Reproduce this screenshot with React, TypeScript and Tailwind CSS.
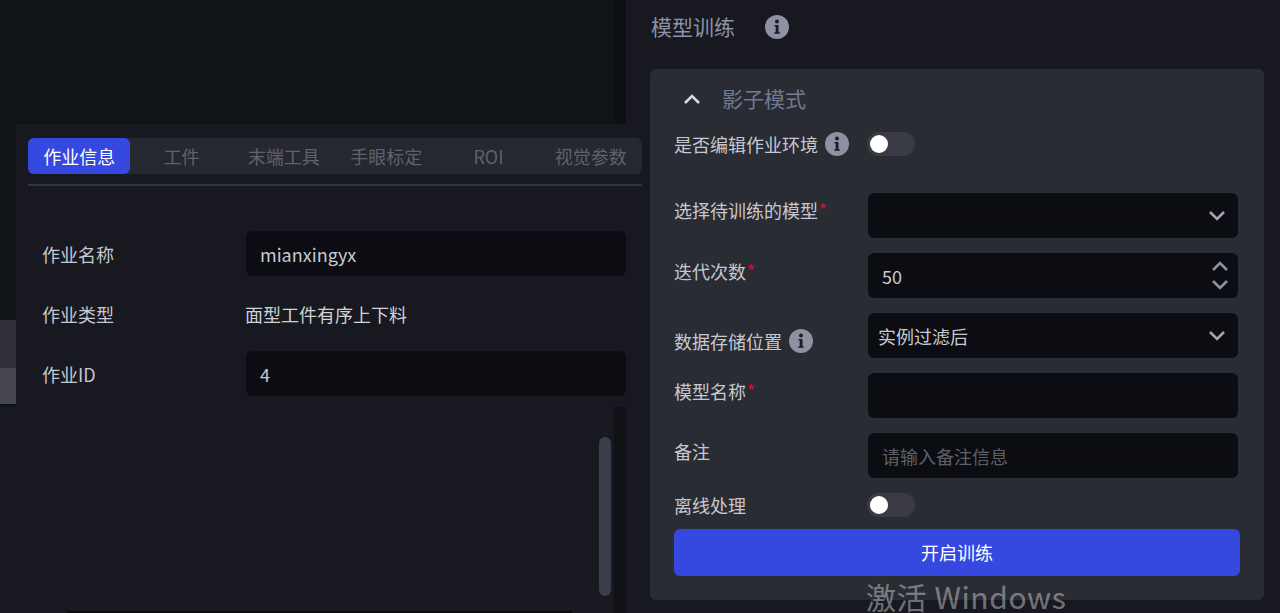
import type { ReactNode } from 'react';

function InfoIcon() {
  return (
    <svg width="24" height="24" viewBox="0 0 24 24" className="shrink-0">
      <circle cx="12" cy="12" r="12" fill="#8f90a2" />
      <circle cx="12" cy="6.6" r="2" fill="#1c1d24" />
      <path d="M9.5 10h4v7.2h1.3v1.6H9.3v-1.6h1.4v-5.6H9.5z" fill="#1c1d24" />
    </svg>
  );
}

function Chevron({ up = false, className = '' }: { up?: boolean; className?: string }) {
  return (
    <svg width="18" height="11" viewBox="0 0 18 11" className={className}>
      <path d={up ? 'M2 9l7-7 7 7' : 'M2 2l7 7 7-7'} fill="none" stroke="currentColor" strokeWidth="2.6" />
    </svg>
  );
}

function Toggle() {
  return (
    <div className="flex h-6 w-12 items-center rounded-full bg-[#3a3b45] pl-[3px]">
      <div className="h-[18px] w-[18px] rounded-full bg-white" />
    </div>
  );
}

function Req() {
  return <span className="ml-[1px] align-[3px] text-[15px] font-bold leading-none text-[#c4112f]">*</span>;
}

function Row({ label, pt, children }: { label: ReactNode; pt: string; children: ReactNode }) {
  return (
    <div className="flex h-[45px]">
      <div className={`w-[194px] shrink-0 text-[#c6c8d0] ${pt}`}>{label}</div>
      <div className="relative flex h-[45px] w-[370px] items-center rounded-md bg-[#0c0d12] px-[14px] text-[#c8cad2]">
        {children}
      </div>
    </div>
  );
}

const tabs = ['作业信息', '工件', '末端工具', '手眼标定', 'ROI', '视觉参数'];

function JobWindow() {
  return (
    <div className="absolute left-4 top-[124px] z-10 h-[283px] w-[634px] bg-[#181920] pl-3 pt-[14px]">
      <div className="flex h-9 w-[614px] rounded-md bg-[#262830]">
        {tabs.map((t, i) => (
          <div
            key={t}
            className={
              i === 0
                ? 'flex flex-1 items-center justify-center rounded-md bg-[#3549e0] text-white'
                : 'flex flex-1 items-center justify-center text-[#5f616b]'
            }
          >
            {t}
          </div>
        ))}
      </div>
      <div className="mt-[10px] h-[2px] w-[614px] bg-[#30323c]" />
      <div className="mt-[45px] flex flex-col gap-[15px] pl-[14px] text-[#c6c8d0]">
        <div className="flex h-[45px] items-center">
          <div className="w-[204px]">作业名称</div>
          <div className="flex h-[45px] w-[380px] items-center rounded-md bg-[#0c0d12] px-[14px] text-[#c8cad2]">
            mianxingyx
          </div>
        </div>
        <div className="flex h-[45px] items-center">
          <div className="w-[203px]">作业类型</div>
          <div className="text-[#d0d2d8]">面型工件有序上下料</div>
        </div>
        <div className="flex h-[45px] items-center">
          <div className="w-[204px]">作业ID</div>
          <div className="flex h-[45px] w-[380px] items-center rounded-md bg-[#0c0d12] px-[14px] text-[#c8cad2]">
            4
          </div>
        </div>
      </div>
    </div>
  );
}

export default function App() {
  return (
    <div className="relative flex h-[613px] w-[1280px] overflow-hidden bg-[#181920] font-['Noto_Sans_CJK_SC','Noto_Sans',sans-serif] text-[18px] leading-6">
      {/* Left side */}
      <div className="flex w-[626px] shrink-0 flex-col">
        <div className="flex h-[407px] justify-between bg-[#101318]">
          <div className="flex w-4 flex-col pt-[320px]">
            <div className="h-12 bg-[#2f3038]" />
            <div className="h-9 bg-[#45464e]" />
          </div>
          <div className="w-3 bg-[#0e0f13]" />
        </div>
        <div className="flex min-h-0 flex-1">
          <div className="flex flex-1 flex-col justify-end pl-[67px] pr-[27px]">
            <div className="h-[2px] bg-[#0b0c10]" />
          </div>
          <div className="mr-[3px] mt-[30px] mb-[17px] w-3 rounded-full bg-[#3c3d4a]" />
          <div className="w-3 bg-[#101114]" />
        </div>
      </div>

      <JobWindow />

      {/* Right side */}
      <div className="flex min-w-0 flex-1 flex-col pl-6 pr-4">
        <div className="flex h-[54px] items-center gap-[30px] pl-[1px] text-[21px] text-[#8d93a5]">
          <span className="mb-[2px]">模型训练</span>
          <InfoIcon />
        </div>
        <div className="mt-[15px] h-[531px] rounded-md bg-[#2a2c34] pl-6">
          <div className="flex h-[60px] items-center text-[21px] text-[#737a8f]">
            <Chevron up className="ml-[9px] mr-[21px] text-[#d8d9de]" />
            <span className="mb-[2px]">影子模式</span>
          </div>
          <div className="mt-[3px] flex h-6 items-center text-[#c6c8d0]">
            <span>是否编辑作业环境</span>
            <span className="ml-[7px]">
              <InfoIcon />
            </span>
            <div className="ml-[18px]">
              <Toggle />
            </div>
          </div>
          <div className="mt-[37px] flex flex-col gap-[15px]">
            <Row label={<>选择待训练的模型<Req /></>} pt="pt-[5px]">
              <Chevron className="absolute right-3 text-[#a3a4b2]" />
            </Row>
            <Row label={<>迭代次数<Req /></>} pt="pt-[6px]">
              50
              <div className="absolute right-[9px] flex flex-col gap-[7px] text-[#8f90a0]">
                <Chevron up />
                <Chevron />
              </div>
            </Row>
            <Row
              label={
                <div className="mt-[4px] flex items-center gap-[7px]">
                  数据存储位置
                  <InfoIcon />
                </div>
              }
              pt="pt-[12px]"
            >
              <span className="-ml-1">实例过滤后</span>
              <Chevron className="absolute right-3 text-[#a3a4b2]" />
            </Row>
            <Row label={<>模型名称<Req /></>} pt="pt-[6px]">
              {null}
            </Row>
            <Row label="备注" pt="pt-[6px]">
              <span className="text-[#5d6069]">请输入备注信息</span>
            </Row>
          </div>
          <div className="mt-[15px] flex h-6 items-center text-[#c6c8d0]">
            <span className="w-[193px]">离线处理</span>
            <Toggle />
          </div>
          <button className="mt-3 h-[47px] w-[566px] rounded-md bg-[#3549e0] pb-[2px] text-white">开启训练</button>
        </div>
      </div>

      <div className="absolute left-[866px] top-[581px] z-20 font-['Noto_Sans_CJK_SC','Open_Sans',sans-serif] text-[30px] leading-[30px] tracking-[0.6px] text-white/40">
        激活 Windows
      </div>
    </div>
  );
}
